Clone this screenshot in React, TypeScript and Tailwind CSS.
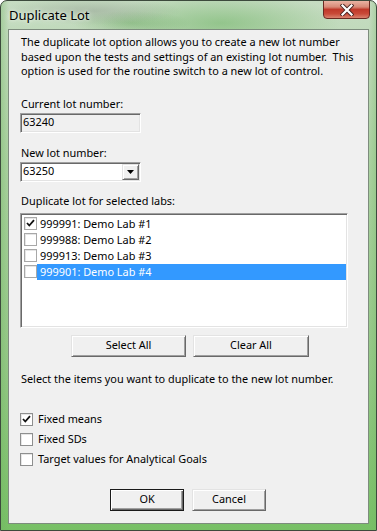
import React from "react";

const font = { fontFamily: '"Noto Sans", "Open Sans", Arial, sans-serif' };

function Check({ checked, list }: { checked?: boolean; list?: boolean }) {
  return (
    <div
      className={`relative shrink-0 w-[13px] h-[13px] bg-white border ${
        list ? "border-[#a8a8a8]" : "border-[#8e8f8f]"
      }`}
      style={{ boxShadow: "inset 1px 1px 0 #e6e6e6" }}
    >
      {checked && (
        <svg viewBox="0 0 11 11" className="absolute left-0 top-0 w-[11px] h-[11px]">
          <path d="M2 5 L4.3 7.5 L9 2.2" fill="none" stroke="#111" strokeWidth="1.8" />
        </svg>
      )}
    </div>
  );
}

function Btn({ label, w, def }: { label: string; w: string; def?: boolean }) {
  return (
    <div
      className={`${w} h-[22px] flex items-center justify-center text-black bg-[#f0f0f0] border ${
        def
          ? "border-[#1a1a1a]"
          : "border-t-[#e3e3e3] border-l-[#e3e3e3] border-b-[#696969] border-r-[#696969]"
      }`}
      style={{
        boxShadow: def
          ? "inset 1px 1px 0 #ffffff, inset -1px -1px 0 #696969, inset -2px -2px 0 #a0a0a0"
          : "inset 1px 1px 0 #ffffff, inset -1px -1px 0 #a0a0a0",
      }}
    >
      {label}
    </div>
  );
}

export default function App() {
  const labs = [
    { t: "999991: Demo Lab #1", c: true },
    { t: "999988: Demo Lab #2", c: false },
    { t: "999913: Demo Lab #3", c: false },
    { t: "999901: Demo Lab #4", c: false, sel: true },
  ];
  return (
    <div
      className="relative w-[377px] h-[531px] overflow-hidden rounded-t-[7px] border border-[#3c4a3c] flex flex-col"
      style={{
        ...font,
        background:
          "radial-gradient(ellipse 90px 14px at 90px 10px, rgba(120,130,120,0.35), transparent), radial-gradient(ellipse 120px 30px at 220px 22px, rgba(90,170,80,0.45), transparent), radial-gradient(ellipse 60px 12px at 130px 22px, rgba(80,150,70,0.35), transparent), linear-gradient(90deg, rgba(110,180,95,0.35) 0px, transparent 8px, transparent 368px, rgba(110,180,95,0.35) 377px), linear-gradient(180deg, #c6dcc2 0%, #acd2a2 30%, #94c886 70%, #78c066 100%)",
      }}
    >
      {/* title bar */}
      <div className="relative h-[28px] shrink-0 flex items-start">
        <div className="ml-[8px] mt-[5px] text-[13px] text-black" style={{ textShadow: "0 0 6px #e8f2e6, 0 0 3px #e8f2e6" }}>
          Duplicate Lot
        </div>
        <div
          className="absolute right-[6px] top-[-1px] w-[47px] h-[19px] rounded-b-[4px] border border-[#6a2a22] flex items-center justify-center"
          style={{
            background:
              "linear-gradient(180deg, #eab3a3 0%, #d88a78 35%, #c0392a 50%, #c94a38 75%, #d9826e 100%)",
          }}
        >
          <svg viewBox="0 0 14 12" className="w-[14px] h-[12px]">
            <path d="M2.5 1.5 L11.5 10.5 M11.5 1.5 L2.5 10.5" stroke="#4a2420" strokeWidth="4" strokeLinecap="square" />
            <path d="M2.5 1.5 L11.5 10.5 M11.5 1.5 L2.5 10.5" stroke="#ffffff" strokeWidth="2.2" strokeLinecap="square" />
          </svg>
        </div>
      </div>

      {/* client */}
      <div className="mx-[7px] h-[495px] bg-[#f0f0f0] border border-[#7d8c7d] pl-[11px] pt-[5px] flex flex-col text-[10.9px] text-black">
        <div className="leading-[14.5px] whitespace-nowrap pl-[1px]">
          The duplicate lot option allows you to create a new lot number
          <br />
          based upon the tests and settings of an existing lot number.&nbsp; This
          <br />
          option is used for the routine switch to a new lot of control.
        </div>

        <div className="mt-[18px] h-[14px] leading-[14px] pl-[1px]">Current lot number:</div>
        <div
          className="mt-[2px] w-[121px] h-[20px] bg-[#f0f0f0] border border-t-[#a0a0a0] border-l-[#a0a0a0] border-b-white border-r-white flex items-center pl-[2px]"
          style={{ boxShadow: "inset 1px 1px 0 #696969, inset -1px -1px 0 #e3e3e3" }}
        >
          63240
        </div>

        <div className="mt-[13px] h-[14px] leading-[14px] pl-[1px]">New lot number:</div>
        <div
          className="mt-[2px] w-[121px] h-[20px] bg-white border border-t-[#a0a0a0] border-l-[#a0a0a0] border-b-white border-r-white flex items-center justify-between pl-[2px] pr-[1px]"
          style={{ boxShadow: "inset 1px 1px 0 #696969, inset -1px -1px 0 #e3e3e3" }}
        >
          <span>63250</span>
          <div
            className="w-[17px] h-[16px] bg-[#f0f0f0] border border-t-[#e3e3e3] border-l-[#e3e3e3] border-b-[#696969] border-r-[#696969] flex items-center justify-center"
            style={{ boxShadow: "inset 1px 1px 0 #fff, inset -1px -1px 0 #a0a0a0" }}
          >
            <svg viewBox="0 0 7 4" className="w-[7px] h-[4px]">
              <path d="M0 0 H7 L3.5 4 Z" fill="#000" />
            </svg>
          </div>
        </div>

        <div className="mt-[12px] h-[14px] leading-[14px] pl-[1px]">Duplicate lot for selected labs:</div>
        <div
          className="mt-[5px] w-[328px] h-[115px] bg-white border border-t-[#a0a0a0] border-l-[#a0a0a0] border-b-white border-r-white pt-[1px] pl-[1px] pr-[1px]"
          style={{ boxShadow: "inset 1px 1px 0 #696969, inset -1px -1px 0 #e3e3e3" }}
        >
          <div className="pt-[1px]">
            {labs.map((l) => (
              <div key={l.t} className="h-[16px] flex items-center">
                <div className="w-[15px] pl-[2px] flex items-center">
                  <Check checked={l.c} list />
                </div>
                <div
                  className={`flex-1 h-[16px] leading-[16px] pl-[3px] ${
                    l.sel ? "bg-[#3399ff] text-white" : ""
                  }`}
                >
                  {l.t}
                </div>
              </div>
            ))}
          </div>
        </div>

        <div className="mt-[7px] ml-[51px] flex gap-[7px]">
          <Btn label="Select All" w="w-[115px]" />
          <Btn label="Clear All" w="w-[116px]" />
        </div>

        <div className="mt-[15px] h-[14px] leading-[14px] pl-[1px]">
          Select the items you want to duplicate to the new lot number.
        </div>

        <div className="mt-[24px] flex flex-col">
          {[
            { t: "Fixed means", c: true },
            { t: "Fixed SDs", c: false },
            { t: "Target values for Analytical Goals", c: false },
          ].map((o) => (
            <div key={o.t} className="h-[20px] flex items-center gap-[5px]">
              <Check checked={o.c} />
              <span>{o.t}</span>
            </div>
          ))}
        </div>

        <div className="mt-[19px] ml-[90px] flex gap-[8px]">
          <Btn label="OK" w="w-[74px]" def />
          <Btn label="Cancel" w="w-[74px]" />
        </div>
      </div>
    </div>
  );
}
